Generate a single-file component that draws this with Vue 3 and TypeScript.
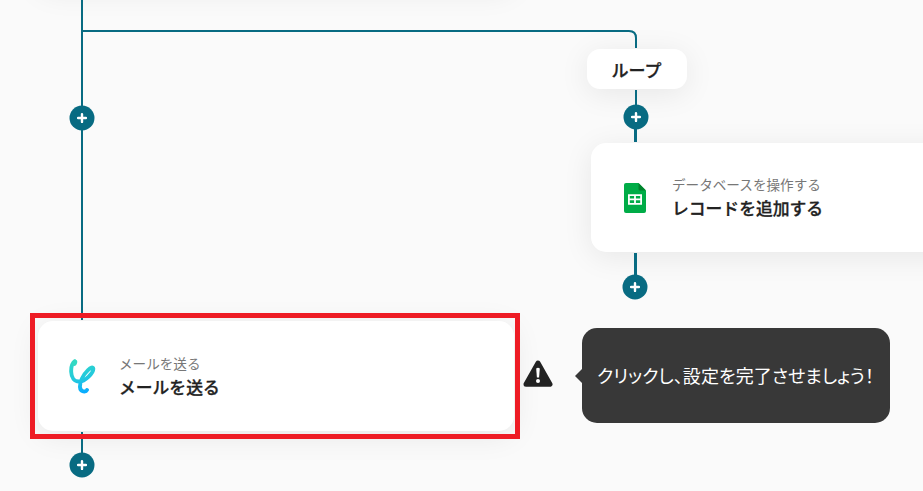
<template>
  <div class="canvas">
    <!-- Node scrolled out above the canvas -->
    <div class="card card-previous"></div>

    <div v-for="step in steps" :key="step.id" class="card" :class="`card-${step.id}`">
      <!-- Spreadsheet icon -->
      <svg v-if="step.id === 'sheet'" class="sheet-icon" viewBox="0 0 22 30">
        <path d="M2 0H14.5L22 7.5V28Q22 30 20 30H2Q0 30 0 28V2Q0 0 2 0Z" fill="#00ac47" />
        <path d="M14.5 0L22 7.5H16Q14.5 7.5 14.5 6Z" fill="#00832d" />
        <path
          d="M4 11.3H18V21.7H4ZM5.8 13V15.5H10.1V13ZM11.9 13V15.5H16.2V13ZM5.8 17.3V20H10.1V17.3ZM11.9 17.3V20H16.2V17.3Z"
          fill="#fff"
          fill-rule="evenodd"
        />
      </svg>

      <!-- Mail app icon -->
      <svg v-else class="mail-icon" viewBox="0 0 28 36">
        <defs>
          <linearGradient id="mail-gradient" gradientUnits="userSpaceOnUse" x1="8" y1="1" x2="17" y2="34">
            <stop offset="0" stop-color="#32d9c3" />
            <stop offset="0.6" stop-color="#22c8df" />
            <stop offset="1" stop-color="#08acff" />
          </linearGradient>
        </defs>
        <path
          d="M6.8 3.4C4.2 5.2 3 10 3.2 14C3.4 19.5 6.2 23.5 11 23.5C17.5 23.5 25.5 14.5 25.3 10.7C25.2 8.6 22.6 9.6 20 12.2C14.5 17.5 11.7 24.5 12 29.2C12.3 34.4 18 34 19 32"
          fill="none"
          stroke="url(#mail-gradient)"
          stroke-width="3.9"
          stroke-linecap="round"
          stroke-linejoin="round"
        />
        <path d="M6.8 4L6.4 5.4" stroke="#32d9c3" stroke-width="4.9" stroke-linecap="round" />
      </svg>

      <div class="card-body">
        <span class="card-caption">{{ step.caption }}</span>
        <span class="card-title">{{ step.title }}</span>
      </div>
    </div>

    <div class="loop-label">ループ</div>

    <!-- Connectors -->
    <svg class="edges" viewBox="0 0 923 491">
      <path d="M82 0V320M82 432V456" />
      <path d="M82 31H629Q636 31 636 38V48M636 90V108" />
      <path class="thick" d="M635.5 126V142M635.5 253V279" />
    </svg>

    <button
      v-for="point in addPoints"
      :key="point.id"
      class="add-btn"
      :style="{ left: `${point.x}px`, top: `${point.y}px` }"
      aria-label="追加"
    >
      <svg viewBox="0 0 25 25">
        <path d="M12.5 8.6V16.4M8.6 12.5H16.4" />
      </svg>
    </button>

    <!-- Highlight around the unfinished step -->
    <div class="highlight"></div>

    <svg class="warning" viewBox="0 0 30 28">
      <path d="M15 3L27 24.2H3Z" fill="#222" stroke="#222" stroke-width="5" stroke-linejoin="round" />
      <path d="M13.2 8.5Q15 7.2 16.8 8.5L16.1 17.4H13.9Z" fill="#fff" />
      <circle cx="15" cy="21" r="2" fill="#fff" />
    </svg>

    <div class="tooltip">クリックし、設定を完了させましょう！</div>
  </div>
</template>

<script setup lang="ts">
interface Step {
  id: 'sheet' | 'mail'
  caption: string
  title: string
}

interface AddPoint {
  id: number
  x: number
  y: number
}

const steps: Step[] = [
  { id: 'sheet', caption: 'データベースを操作する', title: 'レコードを追加する' },
  { id: 'mail', caption: 'メールを送る', title: 'メールを送る' },
]

// Center of each add button on the canvas
const addPoints: AddPoint[] = [
  { id: 1, x: 82, y: 118 },
  { id: 2, x: 636, y: 117 },
  { id: 3, x: 635, y: 287 },
  { id: 4, x: 82, y: 465 },
]
</script>

<style>
body {
  background: #fafafa;
}
</style>

<style scoped>
.canvas {
  position: relative;
  width: 923px;
  height: 491px;
  overflow: hidden;
  background: #fafafa;
  color: #222;
  font-family: 'Noto Sans CJK JP', sans-serif;
}

.card {
  position: absolute;
  display: flex;
  align-items: center;
  box-sizing: border-box;
  width: 476px;
  height: 110px;
  border-radius: 15px;
  background: #fff;
  box-shadow: 0 5px 30px rgba(0, 0, 0, 0.08);
}

.card-previous {
  left: 38px;
  top: -123px;
}

.card-sheet {
  left: 591px;
  top: 143px;
  height: 109px;
  padding-left: 33px;
  gap: 26px;
}

.card-mail {
  left: 38px;
  top: 321px;
  padding-left: 30px;
  gap: 23px;
}

.sheet-icon {
  width: 22px;
  height: 30px;
}

.mail-icon {
  width: 28px;
  height: 36px;
}

.card-body {
  display: flex;
  flex-direction: column;
  padding-bottom: 2px;
  white-space: nowrap;
}

.card-caption {
  color: #777;
  font-size: 13.6px;
  line-height: 22px;
}

.card-title {
  margin-bottom: -1px;
  font-size: 16.8px;
  font-weight: 500;
  line-height: 26px;
  -webkit-text-stroke: 0.3px #222;
}

.loop-label {
  position: absolute;
  left: 587px;
  top: 49px;
  box-sizing: border-box;
  width: 100px;
  height: 40px;
  padding-right: 1px;
  border-radius: 13px;
  background: #fff;
  box-shadow: 0 5px 30px rgba(0, 0, 0, 0.08);
  font-size: 17px;
  font-weight: 500;
  line-height: 41px;
  text-align: center;
  -webkit-text-stroke: 0.3px #222;
}

.edges {
  position: absolute;
  inset: 0;
  width: 923px;
  height: 491px;
  fill: none;
  stroke: #086b82;
  stroke-width: 2;
}

.edges .thick {
  stroke-width: 3;
}

.add-btn {
  position: absolute;
  width: 25px;
  height: 25px;
  padding: 0;
  border: none;
  border-radius: 50%;
  background: #086b82;
  transform: translate(-50%, -50%);
  cursor: pointer;
}

.add-btn svg {
  display: block;
  fill: none;
  stroke: #fff;
  stroke-width: 2.4;
  stroke-linecap: round;
}

.highlight {
  position: absolute;
  left: 30px;
  top: 313px;
  box-sizing: border-box;
  width: 490px;
  height: 126px;
  border: 5px solid #ee1c25;
}

.warning {
  position: absolute;
  left: 523px;
  top: 360px;
  width: 30px;
  height: 28px;
}

.tooltip {
  position: absolute;
  left: 582px;
  top: 328px;
  box-sizing: border-box;
  width: 308px;
  height: 95px;
  padding-left: 15px;
  border-radius: 15px;
  background: #383838;
  color: #fff;
  font-size: 18px;
  font-feature-settings: 'palt';
  letter-spacing: 0.07px;
  line-height: 95px;
  white-space: nowrap;
}

.tooltip::before {
  content: '';
  position: absolute;
  left: -7px;
  top: 41px;
  border-top: 7px solid transparent;
  border-right: 7px solid #383838;
  border-bottom: 7px solid transparent;
}
</style>
